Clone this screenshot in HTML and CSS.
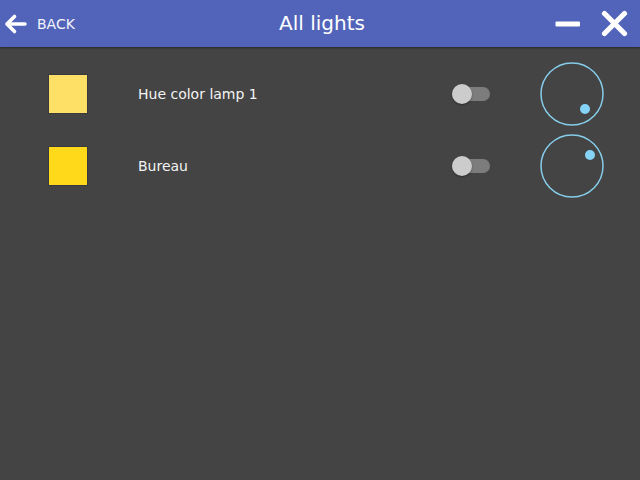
FILE: index.html
```html
<!DOCTYPE html>
<html>
<head>
<meta charset="utf-8">
<link rel="stylesheet" href="styles.css">
</head>
<body>
<header class="topbar">
  <div class="back">
    <svg class="back-icon" width="24" height="24" viewBox="0 0 24 24">
      <path d="M3 12 H21 M3 12 L10.5 4.5 M3 12 L10.5 19.5" fill="none" stroke="#fff" stroke-width="3.6" stroke-linecap="round" stroke-linejoin="round"/>
    </svg>
    <span class="back-label">BACK</span>
  </div>
  <div class="title">All lights</div>
  <div class="actions">
    <svg class="minimize" width="26" height="8" viewBox="0 0 26 8">
      <rect x="0.5" y="1.5" width="24.5" height="5" rx="1" fill="#fff"/>
    </svg>
    <svg class="close" width="28" height="28" viewBox="0 0 28 28">
      <path d="M3.5 3.5 L23.5 23.5 M23.5 3.5 L3.5 23.5" fill="none" stroke="#fff" stroke-width="5.2" stroke-linecap="round"/>
    </svg>
  </div>
</header>
<main class="list">
  <div class="row">
    <div class="swatch swatch-light"></div>
    <div class="name">Hue color lamp 1</div>
    <div class="toggle"><span class="knob"></span></div>
    <svg class="dial" width="64" height="64" viewBox="0 0 64 64">
      <circle cx="32" cy="32" r="31" fill="none" stroke="#86cdea" stroke-width="1.5"/>
      <circle cx="45" cy="47" r="5" fill="#86d3f8"/>
    </svg>
  </div>
  <div class="row">
    <div class="swatch swatch-gold"></div>
    <div class="name">Bureau</div>
    <div class="toggle"><span class="knob"></span></div>
    <svg class="dial" width="64" height="64" viewBox="0 0 64 64">
      <circle cx="32" cy="32" r="31" fill="none" stroke="#86cdea" stroke-width="1.5"/>
      <circle cx="50" cy="21" r="5" fill="#86d3f8"/>
    </svg>
  </div>
</main>
</body>
</html>
```

FILE: styles.css
```css
html, body {
  margin: 0;
  padding: 0;
  height: 100%;
}
body {
  background: #444444;
  font-family: "DejaVu Sans", Verdana, sans-serif;
  color: #f2f2f2;
  overflow: hidden;
}
.topbar {
  height: 47px;
  background: #5264b9;
  display: flex;
  align-items: center;
  position: relative;
  box-shadow: 0 1px 2px rgba(0, 0, 0, 0.45);
}
.back {
  display: flex;
  align-items: center;
  padding-left: 4px;
  width: 200px;
}
.back-icon {
  display: block;
}
.back-label {
  font-size: 14px;
  color: #f4f4fb;
  margin-left: 9px;
  margin-top: 1px;
}
.title {
  flex: 1;
  text-align: center;
  font-size: 20px;
  color: #ffffff;
  margin-left: 0px;
  margin-top: -1px;
}
.actions {
  width: 200px;
  display: flex;
  justify-content: flex-end;
  align-items: center;
  padding-right: 11px;
  box-sizing: border-box;
}
.minimize {
  display: block;
  margin-right: 20px;
  margin-top: 1px;
}
.close {
  display: block;
  margin-top: 0px;
}
.list {
  padding-top: 11px;
}
.row {
  height: 72px;
  display: flex;
  align-items: center;
  padding-left: 48px;
}
.swatch {
  width: 38px;
  height: 38px;
  border: 1px solid #3a3940;
  flex: none;
}
.swatch-light {
  background: #ffe066;
}
.swatch-gold {
  background: #ffd91a;
}
.name {
  margin-left: 50px;
  font-size: 14px;
  flex: 1;
  color: #f3f3f3;
}
.toggle {
  position: relative;
  width: 38px;
  height: 14px;
  border-radius: 7px;
  background: #7c7c7c;
  flex: none;
}
.knob {
  position: absolute;
  left: 0;
  top: -3px;
  width: 20px;
  height: 20px;
  border-radius: 50%;
  background: #cccccc;
  box-shadow: 0 1px 2px rgba(0, 0, 0, 0.35);
}
.dial {
  display: block;
  margin-left: 50px;
  margin-right: 36px;
  flex: none;
}
```
